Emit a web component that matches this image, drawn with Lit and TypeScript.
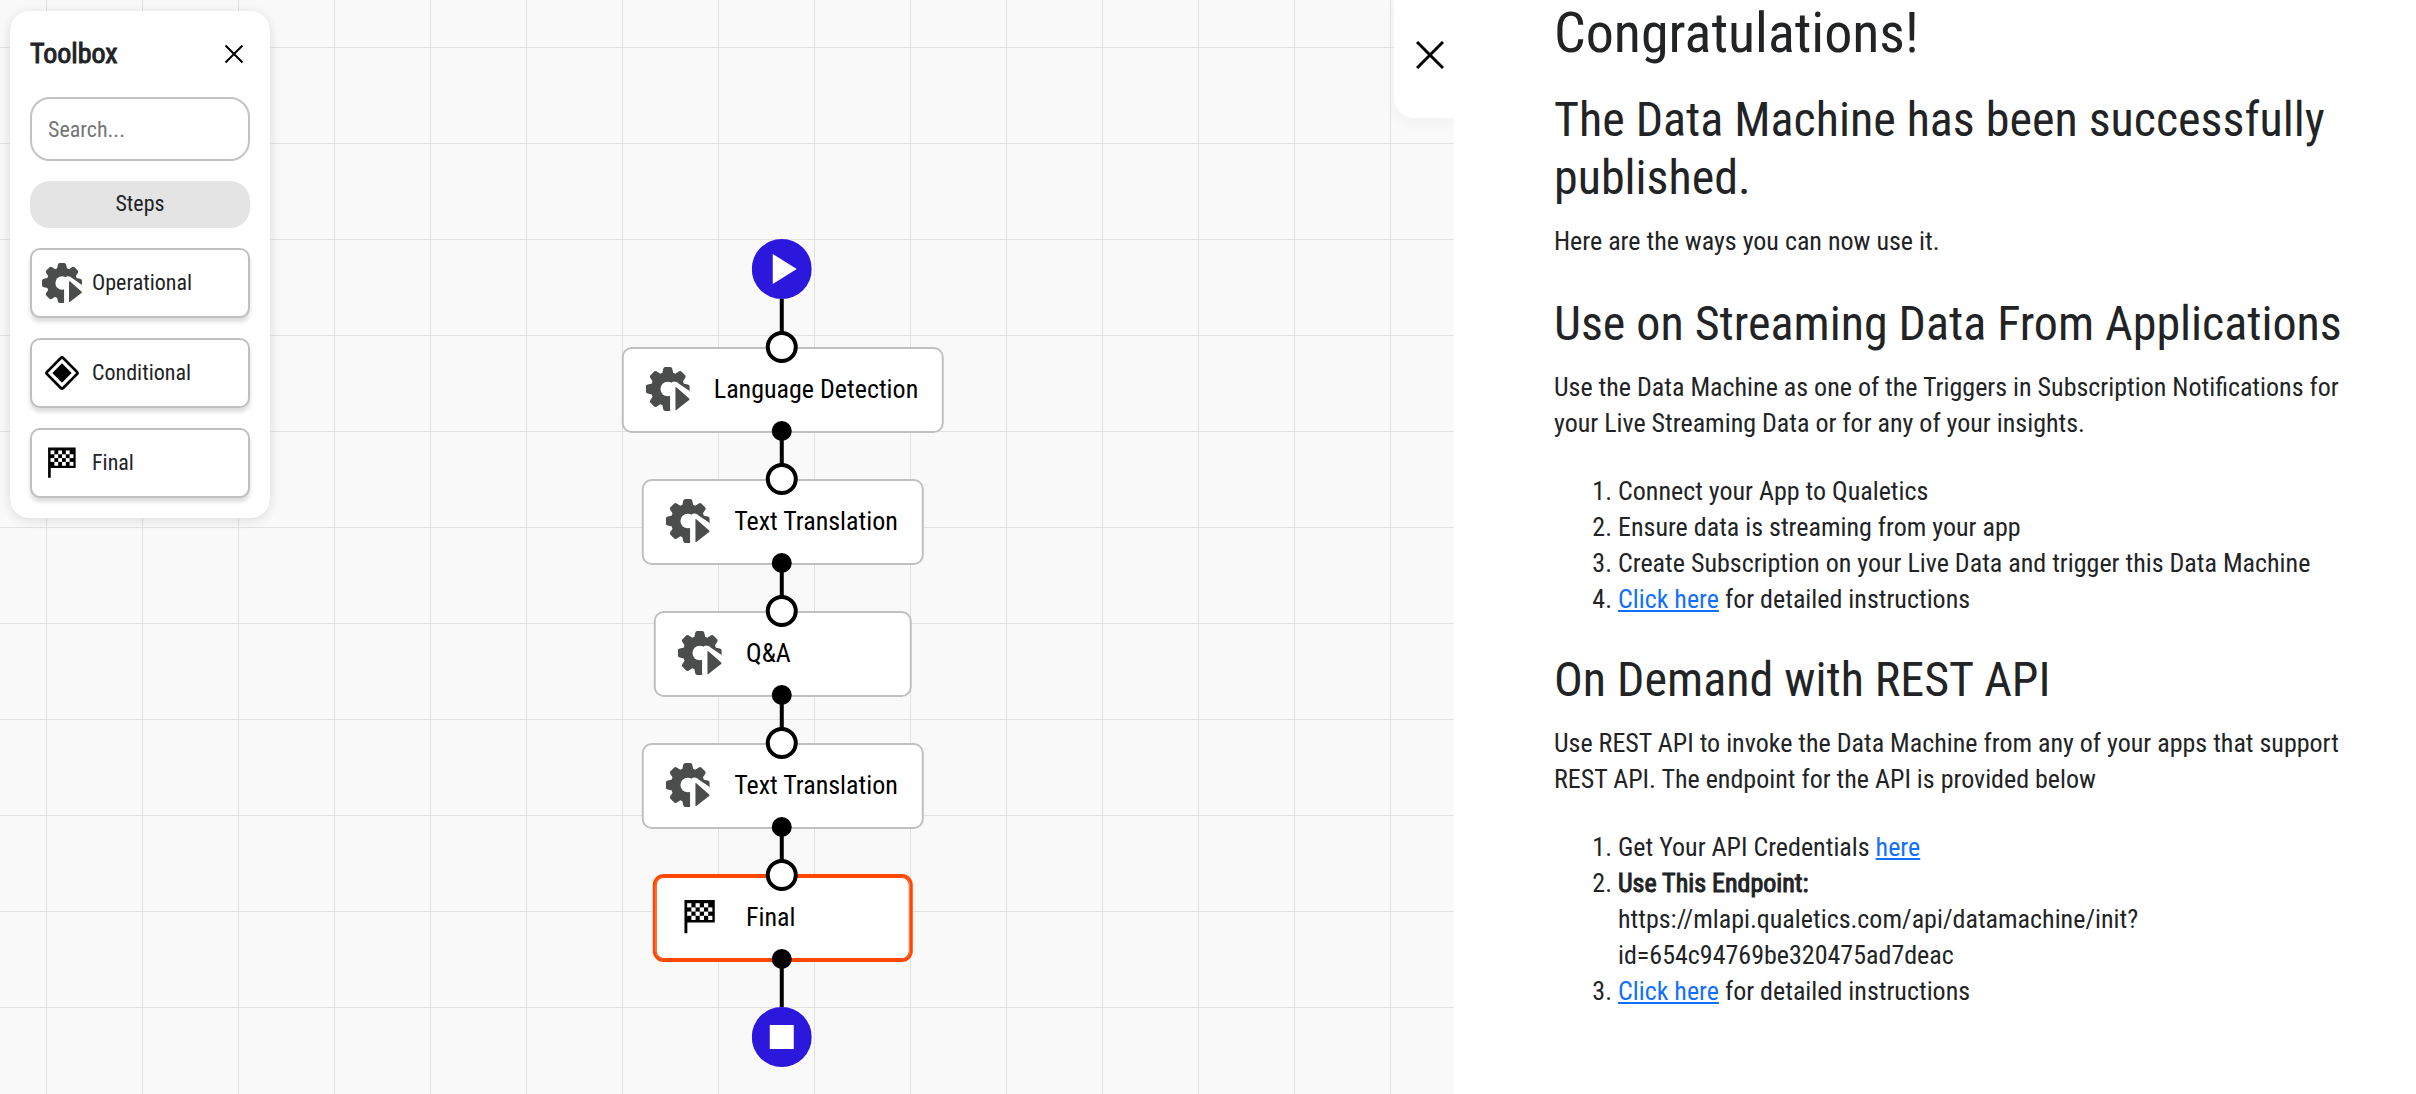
import { LitElement, html, css, svg } from "lit";
import { customElement, property } from "lit/decorators.js";

type StepKind = "operational" | "conditional" | "final";

interface FlowNode {
  label: string;
  kind: StepKind;
  selected?: boolean;
}

const TOOLBOX_STEPS: { label: string; kind: StepKind }[] = [
  { label: "Operational", kind: "operational" },
  { label: "Conditional", kind: "conditional" },
  { label: "Final", kind: "final" },
];

const FLOW: FlowNode[] = [
  { label: "Language Detection", kind: "operational" },
  { label: "Text Translation", kind: "operational" },
  { label: "Q&A", kind: "operational" },
  { label: "Text Translation", kind: "operational" },
  { label: "Final", kind: "final", selected: true },
];

const TEETH = [0, 45, 90, 135, 180, 225, 270, 315];

@customElement("step-icon")
export class StepIcon extends LitElement {
  @property() kind: StepKind = "operational";

  static styles = css`
    :host {
      display: block;
      flex: none;
    }
    svg {
      display: block;
      width: 100%;
      height: 100%;
    }
  `;

  private gear() {
    return svg`
      <g fill="#4b4d4d">
        <circle cx="22" cy="22" r="17"></circle>
        ${TEETH.map(
          (a) => svg`<path d="M16 9 L17.4 2 Q17.8 0 19.5 0 H24.5 Q26.2 0 26.6 2 L28 9 Z" transform="rotate(${a} 22 22)"></path>`
        )}
      </g>
      <circle cx="22" cy="22" r="7.3" fill="#fff"></circle>
      <path d="M24.3 44.5 V17 Q27.5 13.4 31 15.2 L45 24.8 V44.5 Z" fill="#fff"></path>
      <path d="M29.7 20.6 Q29.7 19.6 30.6 20.2 L43.4 31.4 Q44.2 32.2 43.4 33 L30.6 43 Q29.7 43.6 29.7 42.4 Z" fill="#4b4d4d"></path>
    `;
  }

  private diamond() {
    return svg`
      <rect x="9.5" y="9.5" width="25" height="25" rx="1.8" transform="rotate(45 22 22)" fill="#fff" stroke="#000" stroke-width="3"></rect>
      <path d="M22 11.4 L32.6 22 L22 32.6 L11.4 22 Z"></path>
    `;
  }

  private flag() {
    const cells = [];
    for (let row = 0; row < 4; row++) {
      for (let col = 0; col < 6; col++) {
        if ((row + col) % 2 === 0) {
          cells.push(svg`<rect x=${9.4 + col * 4.2} y=${8.2 + row * 4.2} width="4.2" height="4.2"></rect>`);
        }
      }
    }
    return svg`
      <path d="M6.7 5 H37 V27.4 H9.6 V38.2 H6.7 Z"></path>
      <g fill="#fff">${cells}</g>
    `;
  }

  render() {
    const art =
      this.kind === "operational" ? this.gear() : this.kind === "conditional" ? this.diamond() : this.flag();
    return html`<svg viewBox="0 0 44 44" aria-hidden="true">${art}</svg>`;
  }
}

@customElement("tool-box")
export class ToolBox extends LitElement {
  static styles = css`
    :host {
      display: flex;
      flex-direction: column;
      gap: 20px;
      box-sizing: border-box;
      width: 260px;
      padding: 20px;
      border-radius: 20px;
      background: #fff;
      box-shadow: 0 2px 12px rgba(0, 0, 0, 0.12);
    }
    .head {
      display: flex;
      align-items: center;
      justify-content: space-between;
      height: 46px;
    }
    .title {
      margin: 0;
      font-size: 28px;
      line-height: 32px;
      font-weight: 400;
      -webkit-text-stroke: 1px currentColor;
    }
    button,
    input {
      box-sizing: border-box;
      font: inherit;
      color: inherit;
      margin: 0;
    }
    .close {
      padding: 0;
      width: 32px;
      height: 32px;
      border: 0;
      background: none;
      display: grid;
      place-items: center;
    }
    .search {
      width: 100%;
      height: 64px;
      padding: 0 16px;
      border: 2px solid #c3c3c3;
      border-radius: 20px;
      background: #fff;
      font-size: 22px;
    }
    .search::placeholder {
      color: #757575;
      opacity: 1;
    }
    .group {
      height: 47px;
      padding: 0 0 2px;
      border: 0;
      border-radius: 20px;
      background: #e4e4e4;
      font-size: 22px;
    }
    .item {
      display: flex;
      align-items: center;
      gap: 10px;
      height: 70px;
      padding: 0 10px;
      border: 2px solid #c0c0c0;
      border-radius: 10px;
      background: #fff;
      box-shadow: 0 4px 4px rgba(0, 0, 0, 0.14);
      font-size: 22px;
    }
    .glyph {
      width: 40px;
      height: 40px;
    }
  `;

  render() {
    return html`
      <div class="head">
        <h2 class="title">Toolbox</h2>
        <button class="close" aria-label="Close toolbox">
          <svg width="20" height="20" viewBox="0 0 20 20" aria-hidden="true">
            <path d="M1.5 1.5 L18.5 18.5 M18.5 1.5 L1.5 18.5" stroke="#000" stroke-width="2"></path>
          </svg>
        </button>
      </div>
      <input class="search" type="text" placeholder="Search..." aria-label="Search steps" />
      <button class="group">Steps</button>
      ${TOOLBOX_STEPS.map(
        (s) => html`<button class="item"><step-icon class="glyph" .kind=${s.kind}></step-icon>${s.label}</button>`
      )}
    `;
  }
}

@customElement("flow-diagram")
export class FlowDiagram extends LitElement {
  static styles = css`
    :host {
      display: flex;
      flex-direction: column;
      align-items: center;
    }
    .terminal {
      width: 60px;
      height: 60px;
      display: block;
      margin-right: 2px;
    }
    .wire {
      width: 4px;
      height: 48px;
      margin-right: 2px;
      background: #000;
    }
    .wire.short {
      height: 46px;
    }
    .node {
      position: relative;
      display: flex;
      align-items: center;
      gap: 24px;
      box-sizing: border-box;
      min-width: 258px;
      height: 86px;
      padding: 0 24px 2px 22px;
      border: 2px solid #c0c0c0;
      border-radius: 10px;
      background: #fff;
      color: #000;
      font-size: 26px;
      white-space: nowrap;
    }
    .node.selected {
      border-color: #fd4703;
      box-shadow: 0 0 0 1px #fd4703, inset 0 0 0 1px #fd4703;
    }
    .glyph {
      width: 44px;
      height: 44px;
    }
    .in,
    .out {
      position: absolute;
      box-sizing: border-box;
      border-radius: 50%;
    }
    .in {
      width: 32px;
      height: 32px;
      left: calc(50% - 17px);
      top: -18px;
      border: 4px solid #000;
      background: #fff;
    }
    .out {
      width: 20px;
      height: 20px;
      left: calc(50% - 11px);
      bottom: -10px;
      background: #000;
    }
  `;

  render() {
    return html`
      <svg class="terminal" viewBox="0 0 60 60" role="img" aria-label="Start">
        <circle cx="30" cy="30" r="30" fill="#2c17dd"></circle>
        <path d="M21 15 L45 30 L21 45 Z" fill="#fff"></path>
      </svg>
      ${FLOW.map(
        (n, i) => html`
          <div class="wire ${i ? "short" : ""}"></div>
          <div class="node ${n.selected ? "selected" : ""}">
            <step-icon class="glyph" .kind=${n.kind}></step-icon>
            <span>${n.label}</span>
            <i class="in"></i>
            <i class="out"></i>
          </div>
        `
      )}
      <div class="wire short"></div>
      <svg class="terminal" viewBox="0 0 60 60" role="img" aria-label="End">
        <circle cx="30" cy="30" r="30" fill="#2c17dd"></circle>
        <rect x="18" y="18" width="24" height="24" fill="#fff"></rect>
      </svg>
    `;
  }
}

@customElement("app-root")
export class AppRoot extends LitElement {
  static styles = css`
    :host {
      display: grid;
      grid-template-columns: minmax(0, 1454fr) minmax(0, 962fr);
      min-height: 100vh;
      background: #fff;
      color: #212325;
      font-family: "Roboto Condensed", "Liberation Sans Narrow", Roboto, sans-serif;
      font-size: 26px;
      line-height: 36px;
    }
    .canvas {
      position: relative;
      overflow: hidden;
      background-color: #f9f9f9;
      background-image: linear-gradient(to right, #e2e2e2 1px, transparent 1px),
        linear-gradient(to bottom, #e2e2e2 1px, transparent 1px);
      background-size: 96px 96px;
      background-position: 46px 47px;
    }
    .toolbox {
      position: absolute;
      left: 10px;
      top: 11px;
    }
    .flow {
      position: absolute;
      left: 783px;
      top: 239px;
      transform: translateX(-50%);
    }
    .dismiss {
      position: absolute;
      right: 0;
      top: 0;
      display: grid;
      place-items: center;
      width: 60px;
      height: 118px;
      padding: 0 0 8px 12px;
      box-sizing: border-box;
      border: 0;
      border-bottom-left-radius: 20px;
      background: #fff;
      box-shadow: 0 4px 16px rgba(0, 0, 0, 0.04);
    }
    .panel {
      padding: 0 64px 40px 100px;
    }
    h1,
    h2 {
      margin: 0;
      font-weight: 400;
    }
    h1 {
      font-size: 56px;
      line-height: 66px;
      margin-bottom: 25px;
    }
    h2 {
      font-size: 48px;
      line-height: 58px;
      margin-bottom: 16px;
    }
    p {
      margin: 0 0 32px;
    }
    .intro {
      margin-bottom: 36px;
    }
    ol {
      margin: 0 0 34px;
      padding-left: 64px;
    }
    b {
      font-weight: 400;
      -webkit-text-stroke: 1px currentColor;
    }
    a {
      color: #1270fd;
    }
  `;

  render() {
    return html`
      <main class="canvas">
        <flow-diagram class="flow"></flow-diagram>
        <tool-box class="toolbox"></tool-box>
        <button class="dismiss" aria-label="Close panel">
          <svg width="28" height="28" viewBox="0 0 28 28" aria-hidden="true">
            <path d="M1 1 L27 27 M27 1 L1 27" stroke="#000" stroke-width="3"></path>
          </svg>
        </button>
      </main>
      <aside class="panel">
        <h1>Congratulations!</h1>
        <h2>The Data Machine has been successfully published.</h2>
        <p class="intro">Here are the ways you can now use it.</p>
        <h2>Use on Streaming Data From Applications</h2>
        <p>
          Use the Data Machine as one of the Triggers in Subscription Notifications for your Live Streaming Data or for
          any of your insights.
        </p>
        <ol>
          <li>Connect your App to Qualetics</li>
          <li>Ensure data is streaming from your app</li>
          <li>Create Subscription on your Live Data and trigger this Data Machine</li>
          <li><a href="#streaming">Click here</a> for detailed instructions</li>
        </ol>
        <h2>On Demand with REST API</h2>
        <p>
          Use REST API to invoke the Data Machine from any of your apps that support REST API. The endpoint for the API
          is provided below
        </p>
        <ol>
          <li>Get Your API Credentials <a href="#credentials">here</a></li>
          <li><b>Use This Endpoint:</b><br />https://mlapi.qualetics.com/api/datamachine/init?id=654c94769be320475ad7deac</li>
          <li><a href="#rest">Click here</a> for detailed instructions</li>
        </ol>
      </aside>
    `;
  }
}
